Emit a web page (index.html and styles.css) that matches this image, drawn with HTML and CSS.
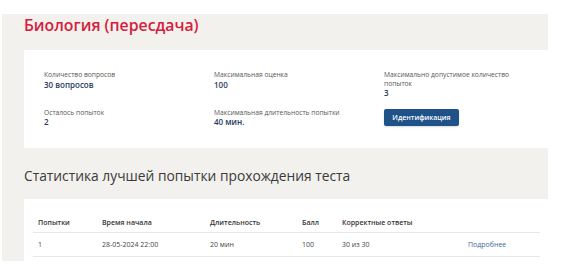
FILE: index.html
```html
<!DOCTYPE html>
<html lang="ru">
<head>
  <meta charset="UTF-8" />
  <meta name="viewport" content="width=device-width, initial-scale=1.0" />
  <title>Биология (пересдача)</title>
  <link rel="stylesheet" href="styles.css">
</head>
<body>
  <div class="page">
    <h1 class="title">Биология (пересдача)</h1>

    <div class="card info">
      <div class="info-grid">
        <div class="item">
          <div class="label">Количество вопросов</div>
          <div class="value">30 вопросов</div>
        </div>
        <div class="item">
          <div class="label">Максимальная оценка</div>
          <div class="value">100</div>
        </div>
        <div class="item">
          <div class="label">Максимально допустимое количество попыток</div>
          <div class="value">3</div>
        </div>
        <div class="item">
          <div class="label">Осталось попыток</div>
          <div class="value">2</div>
        </div>
        <div class="item">
          <div class="label">Максимальная длительность попытки</div>
          <div class="value">40 мин.</div>
        </div>
        <div class="item">
          <button class="btn">Идентификация</button>
        </div>
      </div>
    </div>

    <h2 class="section-title">Статистика лучшей попытки прохождения теста</h2>

    <div class="card stats">
      <table>
        <thead>
          <tr>
            <th class="c-try">Попытки</th>
            <th class="c-start">Время начала</th>
            <th class="c-dur">Длительность</th>
            <th class="c-score">Балл</th>
            <th class="c-correct">Корректные ответы</th>
            <th></th>
          </tr>
        </thead>
        <tbody>
          <tr>
            <td>1</td>
            <td>28-05-2024 22:00</td>
            <td>20 мин</td>
            <td>100</td>
            <td>30 из 30</td>
            <td><a href="#">Подробнее</a></td>
          </tr>
        </tbody>
      </table>
    </div>
  </div>
</body>
</html>
```

FILE: styles.css
```css
:root {
  --grey: #f2f1ee;
  --red: #d2203d;
  --navy: #1f3a60;
  --blue: #1e5288;
  --link: #3c6996;
  --line: #e8e8e8;
  --font: 'Open Sans', 'Noto Sans', sans-serif;
}
* {
  margin: 0;
  padding: 0;
  box-sizing: border-box;
}
body {
  font-family: var(--font);
  background: #fff;
  color: #444;
}
.page {
  margin: 14px 14px 0 2px;
  padding: 0 0 0 22px;
  background: var(--grey);
}
.title {
  font-size: 15.8px;
  font-weight: 600;
  color: var(--red);
  line-height: 20px;
  padding: 1px 0 15px;
}
.card {
  background: #fff;
}
.info {
  padding: 21px 20px 21px;
}
.info-grid {
  display: grid;
  grid-template-columns: 140px 140px 140px;
  column-gap: 30px;
  row-gap: 11px;
}
.label {
  font-size: 6.7px;
  line-height: 8.5px;
  color: #555;
}
.value {
  font-size: 8px;
  line-height: 9.5px;
  font-weight: 600;
  color: var(--navy);
}
.btn {
  display: block;
  font-family: var(--font);
  font-size: 7px;
  font-weight: 600;
  color: #fff;
  background: var(--blue);
  border: none;
  border-radius: 2px;
  height: 17px;
  width: 75px;
  box-shadow: 0 1px 2px rgba(0,0,0,0.15);
}
.section-title {
  font-size: 13.8px;
  font-weight: 400;
  color: #3a3a3a;
  line-height: 20px;
  padding: 18px 0 13px;
}
.stats {
  padding: 14px 8px 4px 9px;
}
table {
  width: 507px;
  border-collapse: collapse;
  font-size: 7px;
}
th, td {
  text-align: left;
  padding: 0 0 0 5px;
  border-bottom: 1px solid var(--line);
}
th {
  height: 20px;
  font-weight: 600;
  color: #333;
}
td {
  height: 24px;
  color: #444;
}
.c-try { width: 64px; }
.c-start { width: 108px; }
.c-dur { width: 92px; }
.c-score { width: 40px; }
.c-correct { width: 126px; }
td a {
  color: var(--link);
  text-decoration: none;
}
```
